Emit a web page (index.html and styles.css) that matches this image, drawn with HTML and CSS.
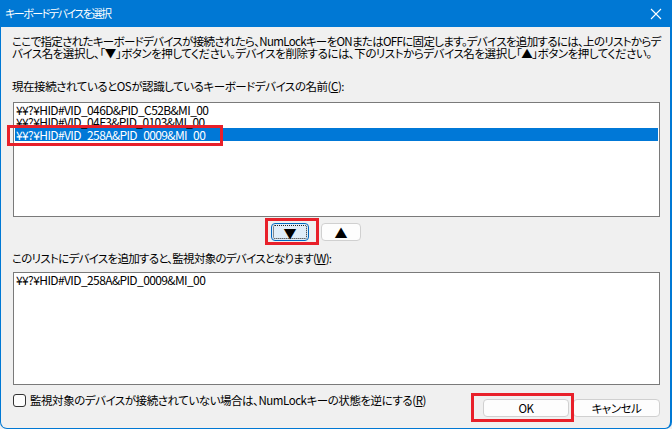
FILE: index.html
```html
<!DOCTYPE html>
<html lang="ja">

<head>
    <meta charset="UTF-8">
    <title>キーボードデバイスを選択</title>
    <link rel="stylesheet" href="styles.css">
</head>

<body>
    <div class="window">
        <div class="titlebar">
            <span class="title">キーボードデバイスを選択</span>
            <svg class="close" width="12" height="12" viewBox="0 0 12 12">
                <path d="M1 1 L11 11 M11 1 L1 11" stroke="#fff" stroke-width="1.1" fill="none"/>
            </svg>
        </div>
        <div class="content">
            <p class="desc">
                <span class="tight">ここで指定されたキーボードデバイスが接続されたら、NumLockキーをONまたはOFFに固定します。デバイスを追加するには、上のリストからデ</span><br>
                <span>バイス名を選択し、「▼」ボタンを押してください。デバイスを削除するには、下のリストからデバイス名を選択し「▲」ボタンを押してください。</span>
            </p>
            <div class="label first">現在接続されているとOSが認識しているキーボードデバイスの名前(<u>C</u>):</div>
            <div class="list top-list">
                <div class="row">¥¥?¥HID#VID_046D&amp;PID_C52B&amp;MI_00</div>
                <div class="row">¥¥?¥HID#VID_04F3&amp;PID_0103&amp;MI_00</div>
                <div class="row selected">¥¥?¥HID#VID_258A&amp;PID_0009&amp;MI_00</div>
            </div>
            <div class="arrows">
                <div class="btn small focused"><span class="focus-ring">▼</span></div>
                <div class="btn small">▲</div>
            </div>
            <div class="label second">このリストにデバイスを追加すると、監視対象のデバイスとなります(<u>W</u>):</div>
            <div class="list bottom-list">
                <div class="row">¥¥?¥HID#VID_258A&amp;PID_0009&amp;MI_00</div>
            </div>
            <div class="footer">
                <label class="check">
                    <span class="box"></span>
                    <span>監視対象のデバイスが接続されていない場合は、NumLockキーの状態を逆にする(<u>R</u>)</span>
                </label>
                <div class="actions">
                    <div class="btn ok">OK</div>
                    <div class="btn cancel">キャンセル</div>
                </div>
            </div>
        </div>

        <div class="mark mark-row"></div>
        <div class="mark mark-down"></div>
        <div class="mark mark-ok"></div>
    </div>
</body>

</html>
```

FILE: styles.css
```css
* {
    margin: 0;
    padding: 0;
    box-sizing: border-box;
}

body {
    background: #f0f0f0;
    font-family: "Noto Sans CJK JP", "Noto Sans", sans-serif;
    font-size: 11.5px;
    letter-spacing: -0.45px;
    font-feature-settings: "palt";
    color: #000;
}

.window {
    position: relative;
    width: 672px;
    height: 429px;
    background-color: #f0f0f0;
    border: 1px solid #0078d4;
    border-right-width: 2px;
    border-top: none;
    border-radius: 0 0 7px 7px;
    overflow: hidden;
}

.titlebar {
    display: flex;
    align-items: center;
    justify-content: space-between;
    height: 27px;
    padding: 0 8px 0 4px;
    background-color: #0078d4;
    color: white;
}

.title {
    font-size: 11px;
    letter-spacing: -1.5px;
    line-height: 27px;
}

.content {
    padding: 8px 10px 0 11px;
}

.desc {
    line-height: 12px;
    white-space: nowrap;
}

.desc .tight {
    letter-spacing: -0.68px;
}

.label {
    line-height: 12px;
}

.label.first {
    margin-top: 21px;
}

.label.second {
    margin-top: 11px;
    letter-spacing: -0.7px;
}

.list {
    margin-left: 1px;
    width: 647px;
    background-color: white;
    border: 1px solid #7a7a7a;
    padding: 1px 1px 0 1px;
    font-size: 12px;
    letter-spacing: -0.6px;
}

.top-list {
    margin-top: 10px;
    height: 115px;
}

.bottom-list {
    margin-top: 8px;
    height: 113px;
}

.row {
    height: 12px;
    line-height: 12px;
    padding-left: 1px;
    white-space: nowrap;
}

.row.selected {
    height: 13px;
    line-height: 13px;
    background-color: #0078d7;
    color: white;
}

.arrows {
    display: flex;
    gap: 12px;
    margin-top: 6px;
    padding-left: 259px;
}

.btn {
    display: flex;
    align-items: center;
    justify-content: center;
    height: 18px;
    background-color: #fdfdfd;
    border: 1px solid #d0d0d0;
    border-radius: 4px;
    font-size: 11.5px;
}

.btn.small {
    width: 40px;
    font-size: 13px;
    letter-spacing: 0;
}

.btn.focused {
    width: 38px;
    background-color: #e0eef9;
    border-color: #0067c0;
    padding: 1px;
}

.focus-ring {
    display: flex;
    align-items: center;
    justify-content: center;
    width: 100%;
    height: 100%;
    border: 1px dotted #222;
    border-radius: 2px;
}

.footer {
    display: flex;
    justify-content: space-between;
    align-items: flex-start;
}

.check {
    display: flex;
    align-items: center;
    gap: 4px;
    margin-top: 9px;
    margin-left: 1px;
    line-height: 13px;
}

.check .box {
    width: 13px;
    height: 13px;
    border: 1px solid #333;
    border-radius: 3px;
    background-color: #fdfdfd;
}

.actions {
    display: flex;
    gap: 4px;
    margin-top: 14px;
}

.btn.ok {
    width: 86px;
}

.btn.cancel {
    width: 87px;
}

.mark {
    position: absolute;
    border: 3px solid #e8202a;
}

.mark-row {
    left: 6px;
    top: 125px;
    width: 216px;
    height: 21px;
}

.mark-down {
    left: 264px;
    top: 218px;
    width: 54px;
    height: 27px;
}

.mark-ok {
    left: 470px;
    top: 393px;
    width: 103px;
    height: 29px;
}
```
